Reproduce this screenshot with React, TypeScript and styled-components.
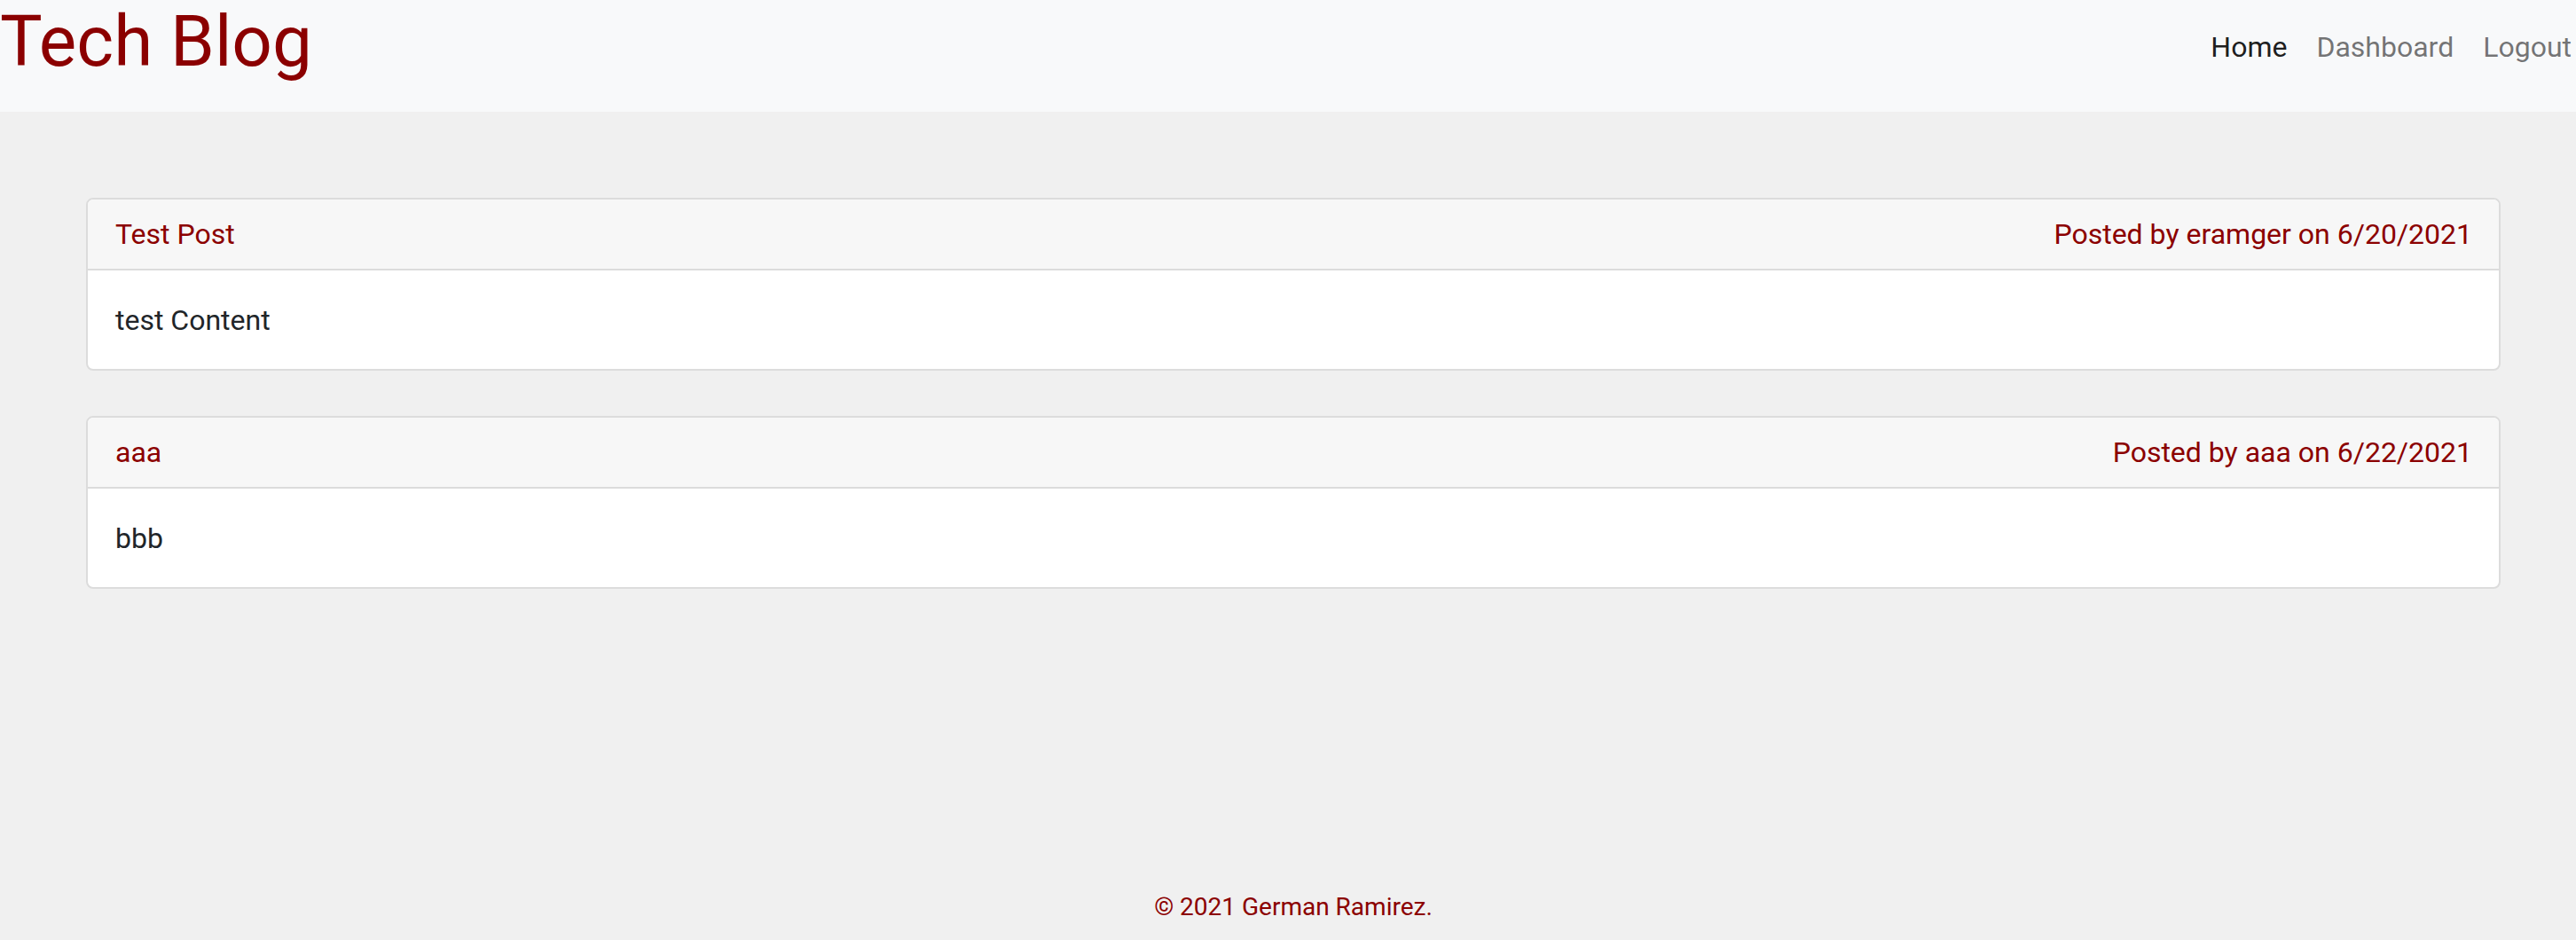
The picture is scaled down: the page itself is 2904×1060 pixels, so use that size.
import React, { FC } from 'react';
import styled, { createGlobalStyle } from 'styled-components';

type Post = {
  title: string;
  author: string;
  date: string;
  content: string;
};

const posts: Post[] = [
  { title: 'Test Post', author: 'eramger', date: '6/20/2021', content: 'test Content' },
  { title: 'aaa', author: 'aaa', date: '6/22/2021', content: 'bbb' },
];

const GlobalStyle = createGlobalStyle`
  html, body {
    margin: 0;
    padding: 0;
  }
  body {
    background: #f0f0f0;
    font-family: Roboto, "Liberation Sans", sans-serif;
    color: #212529;
  }
  * {
    box-sizing: border-box;
  }
`;

const PostCard: FC<{ post: Post }> = ({ post }) => (
  <Card>
    <CardHeader>
      <PostTitle>{post.title}</PostTitle>
      <PostMeta>
        Posted by {post.author} on {post.date}
      </PostMeta>
    </CardHeader>
    <CardBody>{post.content}</CardBody>
  </Card>
);

const App: FC = () => (
  <>
    <GlobalStyle />
    <Page>
      <Header>
        <Title>Tech Blog</Title>
        <Nav>
          <NavLink href="#" $active>
            Home
          </NavLink>
          <NavLink href="#">Dashboard</NavLink>
          <NavLink href="#">Logout</NavLink>
        </Nav>
      </Header>
      <Main>
        {posts.map((post) => (
          <PostCard key={post.title} post={post} />
        ))}
      </Main>
      <Footer>© 2021 German Ramirez.</Footer>
    </Page>
  </>
);

export default App;

const Page = styled.div`
  display: flex;
  flex-direction: column;
  min-height: 100vh;
`;

const Header = styled.header`
  display: flex;
  justify-content: space-between;
  align-items: flex-start;
  height: 126px;
  background: #f8f9fa;
`;

const Title = styled.h1`
  margin: 0;
  padding-top: 7px;
  font-size: 80px;
  font-weight: 400;
  line-height: 1;
  color: #8b0000;
`;

const Nav = styled.nav`
  display: flex;
  gap: 33px;
  padding: 29px 5px 0 0;
`;

const NavLink = styled.a<{ $active?: boolean }>`
  font-size: 32px;
  line-height: 48px;
  text-decoration: none;
  color: ${({ $active }) => ($active ? 'rgba(0, 0, 0, 0.9)' : 'rgba(0, 0, 0, 0.55)')};
`;

const Main = styled.main`
  display: flex;
  flex-direction: column;
  gap: 51px;
  padding: 97px 85px 0 97px;
`;

const Card = styled.div`
  background: #fff;
  border: 2px solid #dcdcdc;
  border-radius: 8px;
  overflow: hidden;
`;

const CardHeader = styled.div`
  display: flex;
  justify-content: space-between;
  padding: 15px 30px 15px 31px;
  background: #f7f7f7;
  border-bottom: 2px solid #dcdcdc;
  font-size: 32px;
  line-height: 48px;
  color: #8b0000;
`;

const PostTitle = styled.span``;

const PostMeta = styled.span``;

const CardBody = styled.div`
  padding: 32px 31px 31px;
  font-size: 32px;
  line-height: 48px;
`;

const Footer = styled.footer`
  margin-top: auto;
  padding: 0 0 16px 12px;
  text-align: center;
  font-size: 28px;
  line-height: 42px;
  color: #8b0000;
`;
